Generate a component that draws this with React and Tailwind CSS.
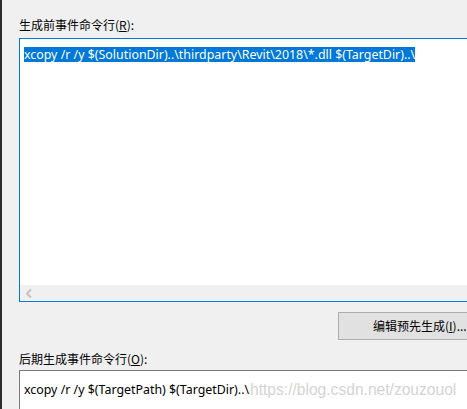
export default function App() {
  const cjk = { fontFamily: '"Noto Sans CJK SC", "Noto Sans", sans-serif' };
  const latin = { fontFamily: '"Noto Sans", "Noto Sans CJK SC", sans-serif' };
  return (
    <div className="relative w-[467px] h-[409px] bg-[#f0f0f0] overflow-hidden flex">
      <div className="w-[2px] shrink-0 bg-[#2b2b2b]" />
      <div className="flex flex-col flex-1 min-w-0">
        <div className="mt-[12px] ml-[14px] h-px bg-[#a0a0a0]" />
        <div className="mt-[5px] ml-[17px] text-[12px] leading-[16px] text-black whitespace-nowrap" style={cjk}>
          生成前事件命令行(<u>R</u>):
        </div>
        <div className="mt-[5px] ml-[17px] w-[470px] h-[264px] shrink-0 border border-[#0078d7] bg-white flex flex-col">
          <div className="flex-1 pt-[2px] pl-[4px]">
            <span className="inline-block bg-[#0078d7] text-white text-[12.4px] leading-[15px] whitespace-nowrap" style={latin}>
              xcopy /r /y $(SolutionDir)..\thirdparty\Revit\2018\*.dll $(TargetDir)..\
            </span>
          </div>
          <div className="h-[16px] bg-[#f0f0f0] flex items-center pl-[6px]">
            <svg width="6" height="9" viewBox="0 0 6 9">
              <path d="M5 0.5 L1 4.5 L5 8.5" fill="none" stroke="#c2c2c2" strokeWidth="2" />
            </svg>
          </div>
        </div>
        <div className="mt-[10px] ml-[336px] w-[140px] h-[28px] shrink-0 border border-[#adadad] bg-[#e1e1e1] flex items-center pl-[34px] text-[12px] text-black whitespace-nowrap" style={cjk}>
          编辑预先生成(<u>I</u>)...
        </div>
        <div className="mt-[11px] ml-[17px] text-[12px] leading-[16px] text-black whitespace-nowrap" style={cjk}>
          后期生成事件命令行(<u>O</u>):
        </div>
        <div className="mt-[3px] ml-[17px] w-[470px] h-[60px] shrink-0 border border-[#7a7a7a] bg-white pt-[5px] pl-[4px]">
          <span className="text-[12.4px] leading-[15px] text-black whitespace-nowrap" style={latin}>
            xcopy /r /y $(TargetPath) $(TargetDir)..\
          </span>
        </div>
      </div>
      <div className="absolute left-[250px] top-[380px] text-[15.6px] leading-[20px] text-[#d4d4d4] whitespace-nowrap" style={{ fontFamily: '"Liberation Sans", Arial, sans-serif' }}>
        https://blog.csdn.net/zouzouol
      </div>
    </div>
  );
}
